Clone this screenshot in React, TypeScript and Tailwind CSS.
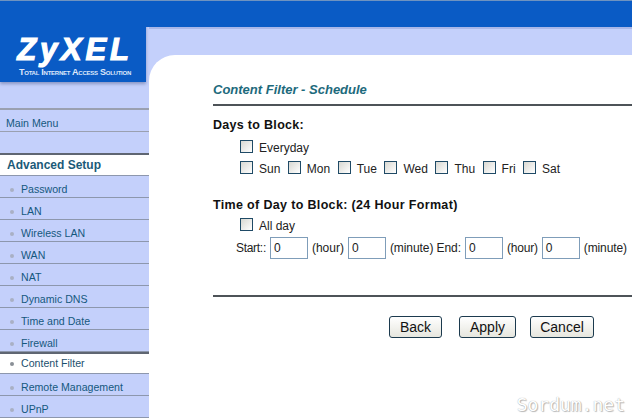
const arial = "font-['Liberation_Sans',Arial,sans-serif]";

function Item({ label, active }: { label: string; active?: boolean }) {
  return (
    <div
      className={
        active
          ? "flex h-[22px] items-center border-b border-[#8d97ad] border-t-2 border-t-[#5f6672] bg-white pl-[10px] text-[#1b4f6e]"
          : "flex h-[22px] items-center border-b border-[#8d97ad] pt-[6px] pl-[10px] text-[#14587e]"
      }
    >
      <span className={active ? "h-[4px] w-[4px] rounded-full bg-[#8a8f96]" : "h-[4px] w-[4px] rounded-sm bg-[#a9b0c4]"} />
      <span className="ml-[7px] text-[10.6px]">{label}</span>
    </div>
  );
}

function Box() {
  return <span className="block h-[13px] w-[13px] shrink-0 border border-[#1f4a66] bg-gradient-to-br from-[#d8d8d2] to-white" />;
}

function Day({ label }: { label: string }) {
  return (
    <span className="flex items-center gap-[6px]">
      <Box />
      <span className="relative top-[2px]">{label}</span>
    </span>
  );
}

function Num() {
  return (
    <span className="flex h-[22px] w-[38px] items-center border border-[#7f9db9] bg-white pl-[3px] text-[12px]">0</span>
  );
}

function Btn({ label, w }: { label: string; w: string }) {
  return (
    <button className={`h-[22px] ${w} rounded-[3px] border border-[#1c3a4e] bg-gradient-to-b from-white to-[#e6e6de] text-[14px] text-[#111]`}>
      {label}
    </button>
  );
}

export default function App() {
  const items1 = ["Password", "LAN", "Wireless LAN", "WAN", "NAT", "Dynamic DNS", "Time and Date", "Firewall"];
  return (
    <div className={`relative flex h-[418px] w-[632px] overflow-hidden bg-[#c4d0fb] ${arial}`}>
      <div className="flex w-[149px] shrink-0 flex-col">
        <div className="flex h-[82px]">
          <div className="flex w-[146px] flex-col items-center border-t border-[#6f93c0] bg-[#0a5bc5] pt-[37px] pl-[4px] shadow-[0_2px_3px_#8a97c4]">
            <span className="text-[31px] leading-[24px] font-bold tracking-[3.8px] text-white italic [-webkit-text-stroke:1.2px_white]">ZyXEL</span>
            <span className="mt-[6px] text-[9px] leading-[9px] font-bold tracking-[-0.25px] whitespace-nowrap text-[#dfe8fa] [font-variant:small-caps]">Total Internet Access Solution</span>
          </div>
          <div className="h-[27px] w-[3px] border-t border-[#6f93c0] bg-[#0a5bc5]" />
        </div>
        <div className="h-[26px]" />
        <div className="flex h-[24px] items-center border-y border-t-2 border-y-[#9aa0b0] pt-[6px] pl-[6px] text-[10.6px] text-[#14587e]">Main Menu</div>
        <div className="h-[21px]" />
        <div className="flex h-[23px] items-center border-t-2 border-b border-t-[#5f6672] border-b-[#8d97ad] bg-white pl-[7px] text-[12px] font-bold text-[#1b5a78]">
          Advanced Setup
        </div>
        {items1.map((l) => (
          <Item key={l} label={l} />
        ))}
        <Item label="Content Filter" active />
        <Item label="Remote Management" />
        <Item label="UPnP" />
      </div>
      <div className="flex min-w-0 flex-1 flex-col">
        <div className="h-[27px] border-t border-[#6f93c0] bg-[#0a5bc5]" />
        <div className="h-[28px] border-t-2 border-[#a9b7e8]" />
        <div className="flex flex-1 flex-col rounded-tl-[26px] bg-white pl-[64px] text-[12px] leading-[13px] text-[#222]">
          <div className="mt-[26px] h-[25px] border-b-2 border-[#4d5358]">
            <span className="text-[13px] leading-[18px] font-bold text-[#1d6a7c] italic">Content Filter - Schedule</span>
          </div>
          <div className="mt-[12px] text-[12.5px] leading-[15px] font-bold tracking-[0.3px] text-[#111]">Days to Block:</div>
          <div className="mt-[7px] ml-[27px] flex items-center gap-[6px]">
            <Box />
            <span className="relative top-[2px]">Everyday</span>
          </div>
          <div className="mt-[8px] ml-[27px] flex gap-[7.5px]">
            {["Sun", "Mon", "Tue", "Wed", "Thu", "Fri", "Sat"].map((d) => (
              <Day key={d} label={d} />
            ))}
          </div>
          <div className="mt-[24px] text-[12.5px] leading-[15px] font-bold tracking-[0.34px] text-[#111]">Time of Day to Block: (24 Hour Format)</div>
          <div className="mt-[5px] ml-[27px] flex items-center gap-[6px]">
            <Box />
            <span className="relative top-[2px]">All day</span>
          </div>
          <div className="mt-[6px] ml-[23px] flex items-center gap-[4px] whitespace-nowrap">
            <span className="tracking-[-0.3px]">Start::</span>
            <Num />
            <span>(hour)</span>
            <Num />
            <span className="tracking-[-0.08px]">(minute) End:</span>
            <Num />
            <span className="tracking-[-0.2px]">(hour)</span>
            <Num />
            <span className="tracking-[-0.1px]">(minute)</span>
          </div>
          <div className="mt-[36px] h-[2px] shrink-0 bg-[#4d5358]" />
          <div className="mt-[19px] ml-[176px] flex">
            <Btn label="Back" w="w-[53px]" />
            <span className="w-[17px]" />
            <Btn label="Apply" w="w-[57px]" />
            <span className="w-[14px]" />
            <Btn label="Cancel" w="w-[64px]" />
          </div>
        </div>
      </div>
      <span className="absolute right-[7px] bottom-[4px] font-['DejaVu_Sans_Mono',monospace] text-[18px] leading-[18px] text-white [text-shadow:0_0_1px_#999,1px_1px_1px_#bbb]">
        Sordum.net
      </span>
    </div>
  );
}
